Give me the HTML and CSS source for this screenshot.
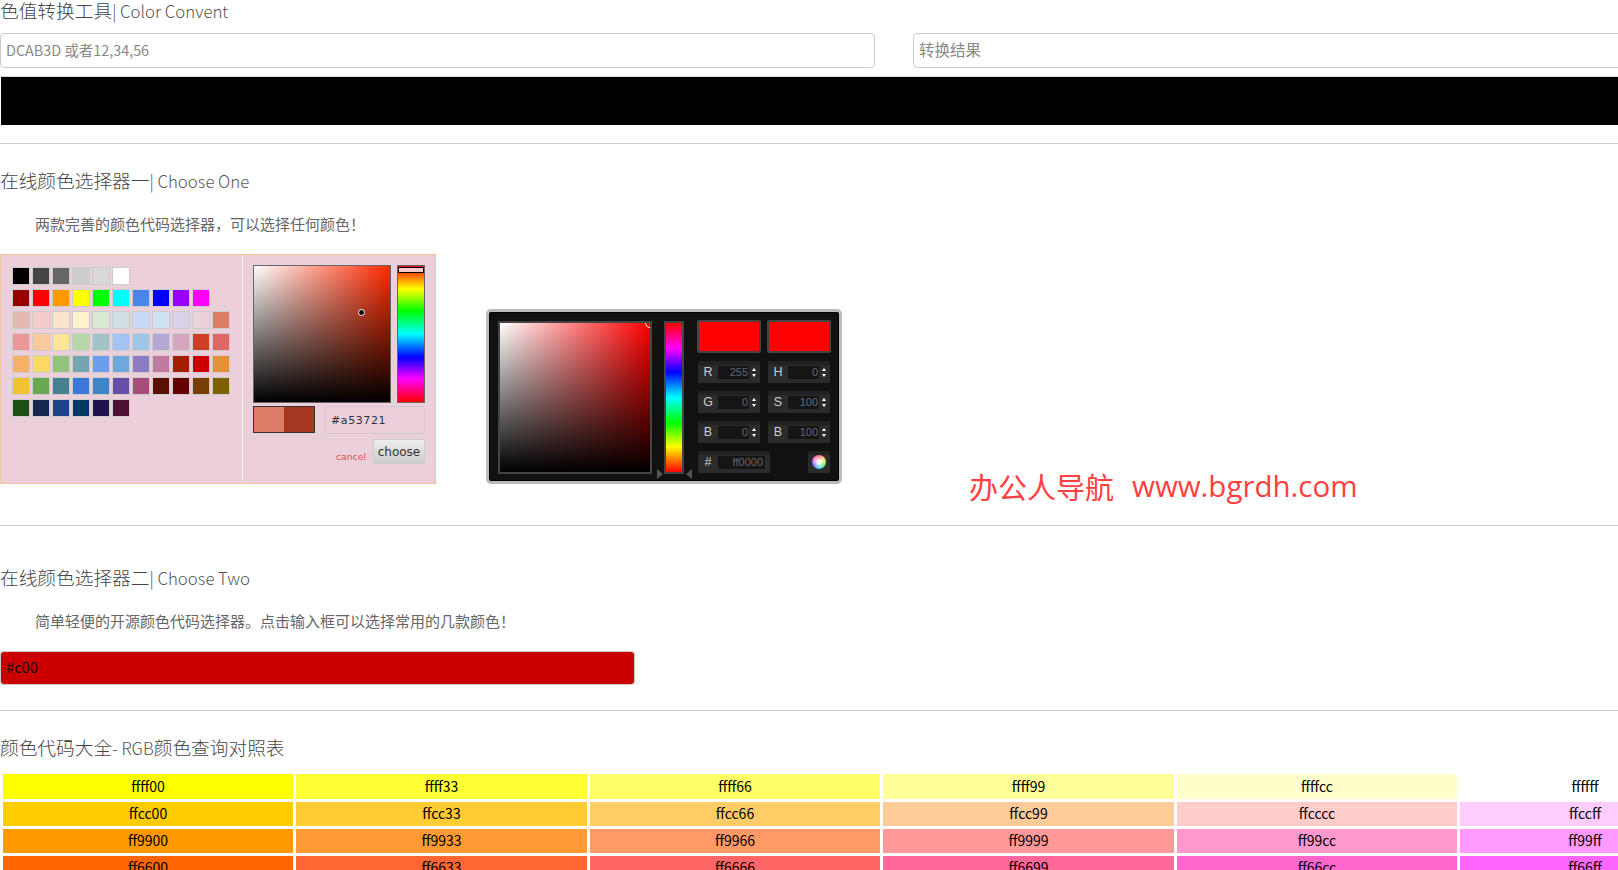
FILE: index.html
```html
<!DOCTYPE html>
<html lang="zh-CN">
<head>
    <meta charset="UTF-8">
    <title>在线颜色选择器</title>
    <link rel="stylesheet" href="styles.css">
</head>
<body>
<div class="page">
    <h2 class="title">色值转换工具<span class="sub">| Color Convent</span></h2>
    <div class="convertRow">
        <input class="textBox sourceBox" type="text" placeholder="DCAB3D 或者12,34,56">
        <input class="textBox resultBox" type="text" placeholder="转换结果">
    </div>
    <div class="blackBar"></div>
    <hr class="line lineFirst">

    <h2 class="title">在线颜色选择器一<span class="sub">| Choose One</span></h2>
    <p class="desc">两款完善的颜色代码选择器，可以选择任何颜色！</p>
    <div class="pickers">
        <div class="spectrum">
            <div class="palette">
                <div class="swatchRow">
                    <i style="background:#000"></i><i style="background:#444"></i><i style="background:#666"></i><i style="background:#ccc"></i><i style="background:#d9d9d9"></i><i style="background:#fff"></i>
                </div>
                <div class="swatchRow">
                    <i style="background:#980000"></i><i style="background:#f00"></i><i style="background:#f90"></i><i style="background:#ff0"></i><i style="background:#0f0"></i><i style="background:#0ff"></i><i style="background:#4a86e8"></i><i style="background:#00f"></i><i style="background:#90f"></i><i style="background:#f0f"></i>
                </div>
                <div class="swatchRow">
                    <i style="background:#e6b8af"></i><i style="background:#f4cccc"></i><i style="background:#fce5cd"></i><i style="background:#fff2cc"></i><i style="background:#d9ead3"></i><i style="background:#d0e0e3"></i><i style="background:#c9daf8"></i><i style="background:#cfe2f3"></i><i style="background:#d9d2e9"></i><i style="background:#ead1dc"></i><i style="background:#dd7e6b"></i>
                </div>
                <div class="swatchRow">
                    <i style="background:#ea9999"></i><i style="background:#f9cb9c"></i><i style="background:#ffe599"></i><i style="background:#b6d7a8"></i><i style="background:#a2c4c9"></i><i style="background:#a4c2f4"></i><i style="background:#9fc5e8"></i><i style="background:#b4a7d6"></i><i style="background:#d5a6bd"></i><i style="background:#cc4125"></i><i style="background:#e06666"></i>
                </div>
                <div class="swatchRow">
                    <i style="background:#f6b26b"></i><i style="background:#ffd966"></i><i style="background:#93c47d"></i><i style="background:#76a5af"></i><i style="background:#6d9eeb"></i><i style="background:#6fa8dc"></i><i style="background:#8e7cc3"></i><i style="background:#c27ba0"></i><i style="background:#a61c00"></i><i style="background:#c00"></i><i style="background:#e69138"></i>
                </div>
                <div class="swatchRow">
                    <i style="background:#f1c232"></i><i style="background:#6aa84f"></i><i style="background:#45818e"></i><i style="background:#3c78d8"></i><i style="background:#3d85c6"></i><i style="background:#674ea7"></i><i style="background:#a64d79"></i><i style="background:#5b0f00"></i><i style="background:#660000"></i><i style="background:#783f04"></i><i style="background:#7f6000"></i>
                </div>
                <div class="swatchRow">
                    <i style="background:#1c4f13"></i><i style="background:#14284f"></i><i style="background:#1c4587"></i><i style="background:#073763"></i><i style="background:#20124d"></i><i style="background:#4c1130"></i>
                </div>
            </div>
            <div class="spectrumSide">
                <div class="spectrumTop">
                    <div class="spectrumSquare"><span class="dragDot"></span></div>
                    <div class="spectrumHue"><span class="hueHandle"></span></div>
                </div>
                <div class="spectrumInputRow">
                    <div class="previewPair"><span class="previewOld"></span><span class="previewNew"></span></div>
                    <div class="hexBox">#a53721</div>
                </div>
                <div class="spectrumButtons">
                    <span class="cancelLink">cancel</span>
                    <button class="chooseButton">choose</button>
                </div>
            </div>
        </div>

        <div class="darkPicker">
            <div class="darkSquare"><span class="darkDot"></span></div>
            <div class="darkHueWrap">
                <span class="arrowLeft"></span>
                <div class="darkHue"></div>
                <span class="arrowRight"></span>
            </div>
            <div class="darkControls">
                <div class="darkPreviews"><span></span><span></span></div>
                <div class="fieldGrid">
                    <div class="field"><b>R</b><span class="fieldValue">255</span><span class="spin"></span></div>
                    <div class="field"><b>H</b><span class="fieldValue">0</span><span class="spin"></span></div>
                    <div class="field"><b>G</b><span class="fieldValue">0</span><span class="spin"></span></div>
                    <div class="field"><b>S</b><span class="fieldValue">100</span><span class="spin"></span></div>
                    <div class="field"><b>B</b><span class="fieldValue">0</span><span class="spin"></span></div>
                    <div class="field"><b>B</b><span class="fieldValue">100</span><span class="spin"></span></div>
                </div>
                <div class="hexRow">
                    <div class="field fieldHex"><b>#</b><span class="fieldValue">ff0000</span></div>
                    <div class="wheelBox"><span class="wheel"></span></div>
                </div>
            </div>
        </div>
    </div>
    <hr class="line lineSecond">

    <h2 class="title">在线颜色选择器二<span class="sub">| Choose Two</span></h2>
    <p class="desc">简单轻便的开源颜色代码选择器。点击输入框可以选择常用的几款颜色！</p>
    <input class="redBox" type="text" value="#c00">
    <hr class="line lineThird">

    <h2 class="title titleTable">颜色代码大全<span class="sub">- RGB</span>颜色查询对照表</h2>
    <table class="colorTable">
        <colgroup>
            <col style="width:290px"><col style="width:291px"><col style="width:290px"><col style="width:291px"><col style="width:280px"><col style="width:250px">
        </colgroup>
        <tr class="firstRow">
            <td style="background:#ffff00">ffff00</td><td style="background:#ffff33">ffff33</td><td style="background:#ffff66">ffff66</td><td style="background:#ffff99">ffff99</td><td style="background:#ffffcc">ffffcc</td><td style="background:#ffffff">ffffff</td>
        </tr>
        <tr>
            <td style="background:#ffcc00">ffcc00</td><td style="background:#ffcc33">ffcc33</td><td style="background:#ffcc66">ffcc66</td><td style="background:#ffcc99">ffcc99</td><td style="background:#ffcccc">ffcccc</td><td style="background:#ffccff">ffccff</td>
        </tr>
        <tr>
            <td style="background:#ff9900">ff9900</td><td style="background:#ff9933">ff9933</td><td style="background:#ff9966">ff9966</td><td style="background:#ff9999">ff9999</td><td style="background:#ff99cc">ff99cc</td><td style="background:#ff99ff">ff99ff</td>
        </tr>
        <tr>
            <td style="background:#ff6600">ff6600</td><td style="background:#ff6633">ff6633</td><td style="background:#ff6666">ff6666</td><td style="background:#ff6699">ff6699</td><td style="background:#ff66cc">ff66cc</td><td style="background:#ff66ff">ff66ff</td>
        </tr>
    </table>
    <div class="watermark"><span>办公人导航</span><span class="watermarkUrl">www.bgrdh.com</span></div>
</div>
</body>
</html>
```

FILE: styles.css
```css
html, body {
    height: 870px;
    margin: 0;
    overflow: hidden;
}

body {
    background-color: #fff;
    color: #444;
    font-family: "Noto Sans CJK SC", "Liberation Sans", sans-serif;
}

.page {
    position: relative;
    width: 1710px;
}

.title {
    color: #444;
    font-size: 18.7px;
    font-weight: 300;
    height: 22px;
    line-height: 20px;
    margin: 0;
}

.sub {
    color: #555;
    font-size: 16.8px;
}

.titleTable {
    margin-bottom: 12px;
}

.desc {
    color: #666;
    font-size: 15px;
    height: 22px;
    line-height: 22px;
    margin: 21px 0 19px;
    padding-left: 35px;
}

.convertRow {
    display: flex;
    margin-top: 11px;
}

.textBox {
    background: #fff;
    border: 1px solid #ccc;
    border-radius: 4px;
    box-sizing: border-box;
    font-family: inherit;
    height: 35px;
    padding: 0 5px 2px;
}

.textBox::placeholder {
    color: #888;
    opacity: 1;
}

.sourceBox {
    font-size: 14.4px;
    width: 875px;
}

.resultBox {
    font-size: 15.5px;
    margin-left: 38px;
    padding-bottom: 3px;
    width: 797px;
}

.blackBar {
    background-color: #000;
    border-top: 1px solid #ddd;
    height: 48px;
    margin: 8px 0 0 1px;
}

.line {
    border: 0;
    border-top: 1px solid #ccc;
    margin: 0;
}

.lineFirst {
    margin-top: 18px;
    margin-bottom: 26px;
}

.lineSecond {
    margin-top: 41px;
    margin-bottom: 41px;
}

.lineThird {
    margin-top: 25px;
    margin-bottom: 26px;
}

.pickers {
    align-items: flex-end;
    display: flex;
}

/* first picker */
.spectrum {
    background-color: #ebd0dc;
    border: 1px solid #f0c49b;
    box-sizing: border-box;
    display: flex;
    height: 230px;
    width: 436px;
}

.palette {
    border-right: 1px solid #eee;
    box-sizing: border-box;
    padding-top: 12px;
    width: 242px;
}

.swatchRow {
    display: flex;
    gap: 2px;
    height: 18px;
    margin-bottom: 4px;
    padding-left: 11px;
}

.swatchRow i {
    border: 1px solid #ccc;
    box-sizing: border-box;
    display: block;
    height: 18px;
    width: 18px;
}

.spectrumSide {
    padding: 10px 0 0 10px;
    width: 172px;
}

.spectrumTop {
    display: flex;
    gap: 6px;
}

.spectrumSquare {
    background: linear-gradient(to top, #000, transparent), linear-gradient(to right, #fff, rgba(255, 255, 255, 0)), #ff2a00;
    border: 1px solid #666;
    box-sizing: border-box;
    height: 138px;
    position: relative;
    width: 138px;
}

.dragDot {
    background-color: #000;
    border: 1px solid #fff;
    border-radius: 50%;
    height: 5px;
    left: 104px;
    position: absolute;
    top: 43px;
    width: 5px;
}

.spectrumHue {
    background: linear-gradient(to bottom, #f00, #ff0 17%, #0f0 33%, #0ff 50%, #00f 67%, #f0f 83%, #f00);
    border: 1px solid #666;
    box-sizing: border-box;
    height: 138px;
    position: relative;
    width: 28px;
}

.hueHandle {
    background-color: #ffc8c8;
    border: 1px solid #000;
    box-sizing: border-box;
    height: 6px;
    left: 0;
    position: absolute;
    right: 0;
    top: 1px;
}

.spectrumInputRow {
    display: flex;
    margin-top: 3px;
}

.previewPair {
    border: 1px solid #333;
    box-sizing: border-box;
    display: flex;
    height: 27px;
    width: 62px;
}

.previewOld {
    background-color: #dd7e6b;
    flex: 1;
}

.previewNew {
    background-color: #a53721;
    flex: 1;
}

.hexBox {
    border: 1px solid #d6c6d2;
    border-radius: 3px;
    box-sizing: border-box;
    color: #333;
    font-family: "DejaVu Sans", sans-serif;
    font-size: 11px;
    height: 28px;
    letter-spacing: 0.6px;
    line-height: 28px;
    margin-left: 10px;
    padding-left: 5px;
    width: 100px;
}

.spectrumButtons {
    align-items: flex-end;
    display: flex;
    justify-content: flex-end;
    margin-top: 5px;
    width: 172px;
}

.cancelLink {
    color: #d9534f;
    font-family: "DejaVu Sans", sans-serif;
    font-size: 9.3px;
    line-height: 14px;
    margin-right: 7px;
}

.chooseButton {
    background: linear-gradient(to bottom, #eee, #ccc);
    border: 1px solid #ccc;
    border-radius: 2px;
    color: #333;
    font-family: "DejaVu Sans", sans-serif;
    font-size: 12px;
    height: 25px;
    padding: 0;
    width: 52px;
}

/* second picker */
.darkPicker {
    align-items: flex-start;
    background-color: #111;
    border: 3px solid #bbb;
    border-radius: 5px;
    box-shadow: inset 0 0 0 1px #000;
    box-sizing: border-box;
    display: flex;
    height: 175px;
    margin-left: 50px;
    padding: 9px 0 0 9px;
    width: 356px;
}

.darkSquare {
    background: linear-gradient(to top, #000, transparent), linear-gradient(to right, #fff, rgba(255, 255, 255, 0)), #f00;
    border: 2px solid #444;
    box-sizing: border-box;
    height: 153px;
    overflow: hidden;
    position: relative;
    width: 154px;
}

.darkDot {
    border: 1px solid #fff;
    border-radius: 50%;
    height: 8px;
    position: absolute;
    right: -5px;
    top: -5px;
    width: 8px;
}

.darkHueWrap {
    margin-left: 12px;
    position: relative;
}

.darkHue {
    background: linear-gradient(to bottom, #f00, #f0f 17%, #00f 33%, #0ff 50%, #0f0 67%, #ff0 83%, #f00);
    border: 2px solid #444;
    box-sizing: border-box;
    height: 153px;
    width: 20px;
}

.arrowLeft, .arrowRight {
    border-bottom: 5px solid transparent;
    border-top: 5px solid transparent;
    bottom: -5px;
    height: 0;
    position: absolute;
    width: 0;
}

.arrowLeft {
    border-left: 6px solid #555;
    left: -7px;
}

.arrowRight {
    border-right: 6px solid #555;
    right: -8px;
}

.darkControls {
    margin-left: 13px;
    margin-top: -1px;
    width: 134px;
}

.darkPreviews {
    display: flex;
    gap: 6px;
    margin-bottom: 8px;
}

.darkPreviews span {
    background-color: #f00;
    border: 2px solid #444;
    border-radius: 2px;
    box-sizing: border-box;
    display: block;
    height: 33px;
    width: 64px;
}

.fieldGrid {
    column-gap: 8px;
    display: grid;
    grid-template-columns: 62px 62px;
    margin-left: 1px;
    row-gap: 8px;
}

.field {
    align-items: center;
    background: linear-gradient(to bottom, #222 4px, #2b2b2b 4px);
    box-sizing: border-box;
    display: flex;
    font-family: "Liberation Sans", sans-serif;
    height: 22px;
}

.field b {
    color: #ccc;
    font-size: 12.5px;
    font-weight: 400;
    text-align: center;
    width: 20px;
}

.fieldValue {
    background-color: #151515;
    box-sizing: border-box;
    color: #667;
    font-size: 11px;
    height: 13px;
    line-height: 13px;
    padding-right: 1px;
    text-align: right;
    width: 31px;
}

.spin {
    height: 9px;
    margin-left: 3px;
    position: relative;
    width: 5px;
}

.spin::before, .spin::after {
    border-left: 2.5px solid transparent;
    border-right: 2.5px solid transparent;
    content: "";
    left: 0;
    position: absolute;
}

.spin::before {
    border-bottom: 3px solid #fff;
    top: 0;
}

.spin::after {
    border-top: 3px solid #fff;
    bottom: 0;
}

.hexRow {
    display: flex;
    justify-content: space-between;
    margin: 8px 1px 0 1px;
}

.fieldHex {
    width: 72px;
}

.fieldHex .fieldValue {
    padding-right: 2px;
    width: 47px;
}

.wheelBox {
    align-items: center;
    background: linear-gradient(to bottom, #222 4px, #2b2b2b 4px);
    display: flex;
    height: 22px;
    justify-content: center;
    width: 22px;
}

.wheel {
    background: radial-gradient(circle, #fff 10%, rgba(255, 255, 255, 0) 70%), conic-gradient(#f66, #fd4, #5e5, #4cf, #66f, #f6d, #f66);
    border-radius: 50%;
    height: 14px;
    width: 14px;
}

/* second input */
.redBox {
    background-color: #c00;
    border: 1px solid #ccc;
    border-radius: 4px;
    box-sizing: border-box;
    color: #111;
    display: block;
    font-family: inherit;
    font-size: 14.67px;
    height: 34px;
    padding: 0 5px 3px;
    width: 635px;
}

/* table */
.colorTable {
    border-collapse: separate;
    border-spacing: 3px;
    color: #000;
    font-size: 14px;
    table-layout: fixed;
    width: 1710px;
}

.colorTable td {
    height: 22px;
    line-height: 22px;
    padding: 0 0 2px;
    text-align: center;
}

.firstRow td {
    height: 23px;
}

.watermark {
    color: #ff4040;
    display: flex;
    font-size: 29px;
    left: 969px;
    line-height: 40px;
    position: absolute;
    top: 466px;
    white-space: nowrap;
}

.watermarkUrl {
    font-family: "Open Sans", sans-serif;
    font-size: 29.5px;
    margin-left: 18px;
}
```
